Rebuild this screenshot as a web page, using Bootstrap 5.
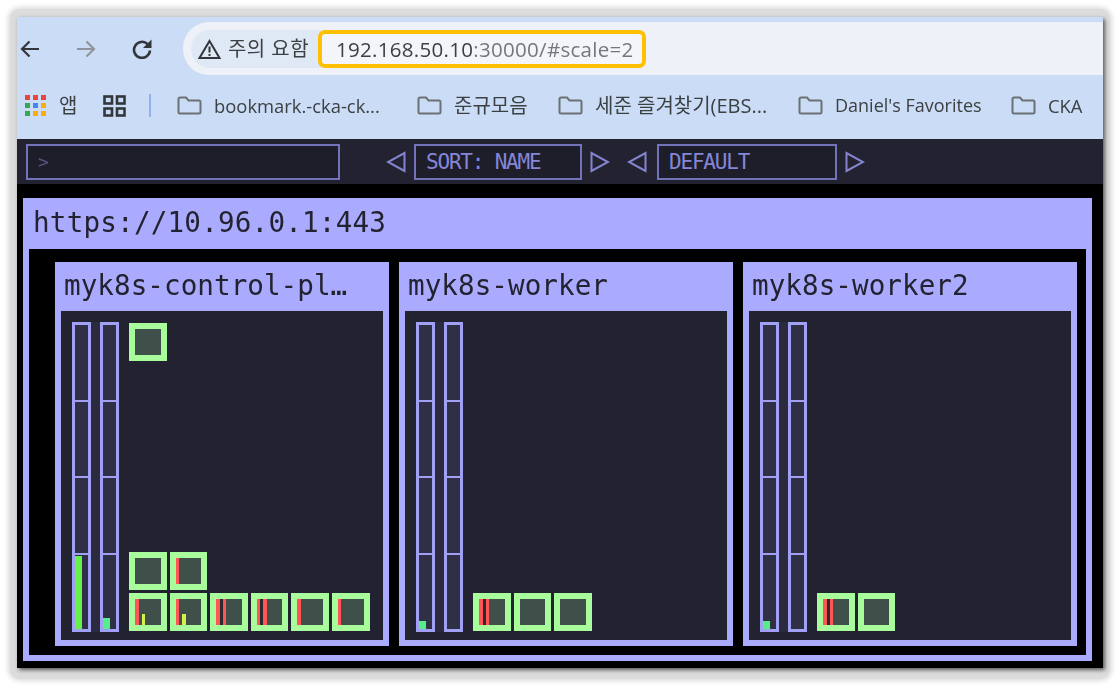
<!DOCTYPE html>
<html lang="ko">
<head>
<meta charset="utf-8">
<title>Kube Ops View</title>
<link href="https://cdn.jsdelivr.net/npm/bootstrap@5.3.0/dist/css/bootstrap.min.css" rel="stylesheet">
<style>
html,body{height:688px;overflow:hidden;background:#fff}
body{padding:9px 0 0 10px}
.frame{width:1100px;height:670px;background:#dcdcdc;box-shadow:0 0 5px 2px #dcdcdc;border-radius:10px;padding:8px 10px 0 7px}
.win{width:1086px;height:651px;background:#000;filter:blur(.5px);box-shadow:2px 2px 4px rgba(0,0,0,.6);overflow:hidden;font-family:"Open Sans","Noto Sans CJK KR",sans-serif;color:#3c4043}
.chrome{height:122px;background:#cbdcf6;padding-top:5px}
.navrow{height:53px;padding-left:3px}
.tb-ic{width:20px;height:20px;flex:none}
.ic2{margin-left:36px}.ic3{margin-left:36px}
.omni{margin-left:31px;flex:1;height:53px;background:#eef1f7;border-radius:26px 0 0 26px;padding-left:8px}
.chip{width:131px;height:38px;background:#dfe8f5;border-radius:19px 0 0 19px;padding-left:7px;gap:7px;font-size:20px;letter-spacing:.45px;white-space:nowrap}
.urlbox{width:328px;height:38px;border:4px solid #ffc000;border-radius:7px;background:#f3f5f9;font-size:20.5px;letter-spacing:.3px;line-height:30px;padding-left:14px;color:#74777c;white-space:nowrap;margin-left:-4px}
.urlbox b{font-weight:400;color:#3c4043}
.bmrow{height:64px;padding-left:8px;font-size:18.4px;white-space:nowrap;padding-bottom:3px}
.bm{flex:none;gap:12px}
.krt{font-size:20px}
.dft{font-size:18px}
.b0{width:78px;gap:13px}.b1{width:46px}.b2{width:28px}.b3{width:240px}.b4{width:141px}.b5{width:213px}.b6{width:240px}
.sep{width:2px;height:23px;background:#8fb2e8}
.darkbar{height:45px;background:#222230;padding-left:9px;font-family:"DejaVu Sans Mono",monospace;color:#8686d8}
.fld{height:36px;border:2px solid #7373bb;background:#1e1e2b;line-height:32px;padding-left:10px;font-size:18px}
.f1{width:314px;color:#555580}
.f2{width:168px;margin:0 8px 0 8px}.f3{width:180px;margin:0 8px 0 10px}
.fld span{display:inline-block;font-size:21px;letter-spacing:-1.2px;white-space:pre}
.tri{width:20px;height:22px;flex:none}
.t1{margin-left:46px}.t2{margin-left:0}.t3{margin-left:17px}
.clu{margin:14px 11px 0 6px;height:463px;background:#aaaaff;padding:0 6px 6px}
.clu-t{height:51px;font-family:"DejaVu Sans Mono",monospace;font-size:27.6px;line-height:50px;padding-left:4px;color:#222230;letter-spacing:.2px}
.clu-b{height:406px;background:#000;padding:13px 8px 9px 26px;gap:10px}
.nod{width:334px;height:384px;background:#aaaaff;padding:0 6px 6px;flex:none}
.nod-t{height:49px;font-family:"DejaVu Sans Mono",monospace;font-size:27.6px;line-height:47px;color:#222230;padding-left:3px;white-space:nowrap;letter-spacing:.05px}
.nod-b{height:329px;background:#222230;padding:11px 0 8px 11px}
.gau{width:19px;height:310px;border:3px solid #a0a0f4;background:#2f2f45;position:relative;flex:none}
.g2{margin-left:9px;box-shadow:-9px 0 0 0 #2b2b3d}
.seg{height:76.6px;border-bottom:2px solid #a0a0f4}
.seg:last-of-type{border:0}
.fil{position:absolute;bottom:0;left:0;width:6.5px}
.f-a{background:#66f04a}.f-b{background:#55ee88}
.pods{margin-left:10px;padding:1px 0 1.5px;height:310px}
.prow{gap:3px}
.pd{width:37.6px;height:37.6px;border:6.3px solid #a9fc9b;background:#3f4f4a;flex:none}
.r{width:3.5px;background:#ff5555;flex:none}
.k{width:3px;background:#2a2a30;flex:none}
.y{width:3.6px;height:11px;background:#d6f04a;align-self:flex-end;margin-left:3px;flex:none}
.rows{gap:3px}
</style>
</head>
<body>
<div class="frame">
<div class="win">
  <div class="chrome">
    <div class="navrow d-flex align-items-center">
      <svg class="tb-ic" viewBox="0 0 20 20" fill="none" stroke="#33373b" stroke-width="2.2"><path d="M19 10H2M9.5 2.5 2 10l7.5 7.5"/></svg>
      <svg class="tb-ic ic2" viewBox="0 0 20 20" fill="none" stroke="#90959c" stroke-width="2.2"><path d="M1 10h17M10.5 2.5 18 10l-7.5 7.5"/></svg>
      <svg class="tb-ic ic3" viewBox="0 0 20 20" fill="none" stroke="#33373b" stroke-width="2.6"><path d="M18 11.500a8 8 0 1 1-2.500-6.500"/><path d="M19.500 .5v8.500H11z" fill="#33373b" stroke="none"/></svg>
      <div class="omni d-flex align-items-center">
        <div class="chip d-flex align-items-center">
          <svg width="23" height="20" viewBox="0 0 23 20" fill="none" stroke="#33373b" stroke-width="2"><path d="M11.5 2 21.5 19h-20z"/><path d="M11.5 7.5v6M11.5 15v2"/></svg>
          <span>주의 요함</span>
        </div>
        <div class="urlbox"><b>192.168.50.10</b>:30000/#scale=2</div>
      </div>
    </div>
    <div class="bmrow d-flex align-items-center">
      <div class="bm b0 d-flex align-items-center">
        <svg width="21" height="21" viewBox="0 0 21 21"><g fill="#e8453c"><rect width="5" height="5"/><rect x="8" width="5" height="5"/><rect x="16" width="5" height="5"/></g><rect y="8" width="5" height="5" fill="#34a853"/><rect x="8" y="8" width="5" height="5" fill="#4285f4"/><rect x="16" y="8" width="5" height="5" fill="#fbac0b"/><rect y="16" width="5" height="5" fill="#34a853"/><rect x="8" y="16" width="5" height="5" fill="#fbac0b"/><rect x="16" y="16" width="5" height="5" fill="#fbac0b"/></svg>
        <span class="krt">앱</span>
      </div>
      <div class="bm b1 d-flex align-items-center">
        <svg width="23" height="22" viewBox="0 0 23 22" fill="none" stroke="#33373b" stroke-width="2.6"><rect x="1.5" y="1.5" width="7.5" height="7"/><rect x="14" y="1.5" width="7.5" height="7"/><rect x="1.5" y="13.5" width="7.5" height="7"/><rect x="14" y="13.5" width="7.5" height="7"/></svg>
      </div>
      <div class="bm b2 d-flex align-items-center"><div class="sep"></div></div>
      <div class="bm b3 d-flex align-items-center">
        <svg width="25" height="19" viewBox="0 0 25 19" fill="none" stroke="#6d7175" stroke-width="2"><path d="M1.5 16V3a1.5 1.5 0 0 1 1.5-1.5h6l2.500 3H22a1.500 1.500 0 0 1 1.500 1.500V16a1.500 1.500 0 0 1-1.500 1.500H3A1.500 1.500 0 0 1 1.500 16z"/></svg>
        <span>bookmark.-cka-ck...</span>
      </div>
      <div class="bm b4 d-flex align-items-center">
        <svg width="25" height="19" viewBox="0 0 25 19" fill="none" stroke="#6d7175" stroke-width="2"><path d="M1.5 16V3a1.5 1.5 0 0 1 1.5-1.5h6l2.500 3H22a1.500 1.500 0 0 1 1.500 1.500V16a1.500 1.500 0 0 1-1.500 1.500H3A1.500 1.500 0 0 1 1.500 16z"/></svg>
        <span class="krt">준규모음</span>
      </div>
      <div class="bm b6 d-flex align-items-center">
        <svg width="25" height="19" viewBox="0 0 25 19" fill="none" stroke="#6d7175" stroke-width="2"><path d="M1.5 16V3a1.5 1.5 0 0 1 1.5-1.5h6l2.500 3H22a1.500 1.500 0 0 1 1.500 1.500V16a1.500 1.500 0 0 1-1.500 1.500H3A1.500 1.500 0 0 1 1.500 16z"/></svg>
        <span class="krt">세준 즐겨찾기(EBS...</span>
      </div>
      <div class="bm b5 d-flex align-items-center">
        <svg width="25" height="19" viewBox="0 0 25 19" fill="none" stroke="#6d7175" stroke-width="2"><path d="M1.5 16V3a1.5 1.5 0 0 1 1.5-1.5h6l2.500 3H22a1.500 1.500 0 0 1 1.500 1.500V16a1.500 1.500 0 0 1-1.500 1.500H3A1.500 1.500 0 0 1 1.500 16z"/></svg>
        <span class="dft">Daniel's Favorites</span>
      </div>
      <div class="bm d-flex align-items-center">
        <svg width="25" height="19" viewBox="0 0 25 19" fill="none" stroke="#6d7175" stroke-width="2"><path d="M1.5 16V3a1.5 1.5 0 0 1 1.5-1.5h6l2.500 3H22a1.500 1.500 0 0 1 1.500 1.500V16a1.500 1.500 0 0 1-1.500 1.500H3A1.500 1.500 0 0 1 1.500 16z"/></svg>
        <span>CKA</span>
      </div>
    </div>
  </div>
  <div class="darkbar d-flex align-items-center">
    <div class="fld f1">&gt;</div>
    <svg class="tri t1" viewBox="0 0 20 22" fill="none" stroke="#8484d0" stroke-width="2"><path d="M18.500 2v18L2 11z"/></svg>
    <div class="fld f2"><span>SORT: NAME</span></div>
    <svg class="tri t2" viewBox="0 0 20 22" fill="none" stroke="#8484d0" stroke-width="2"><path d="M1.500 2v18L18 11z"/></svg>
    <svg class="tri t3" viewBox="0 0 20 22" fill="none" stroke="#8484d0" stroke-width="2"><path d="M18.500 2v18L2 11z"/></svg>
    <div class="fld f3"><span>DEFAULT</span></div>
    <svg class="tri t2" viewBox="0 0 20 22" fill="none" stroke="#8484d0" stroke-width="2"><path d="M1.500 2v18L18 11z"/></svg>
  </div>
  <div class="clu">
    <div class="clu-t">https://10.96.0.1:443</div>
    <div class="clu-b d-flex">
      <div class="nod">
        <div class="nod-t">myk8s-control-pl…</div>
        <div class="nod-b d-flex">
          <div class="gau"><div class="seg"></div><div class="seg"></div><div class="seg"></div><div class="seg"></div><div class="fil f-a" style="height:73px"></div></div>
          <div class="gau g2"><div class="seg"></div><div class="seg"></div><div class="seg"></div><div class="seg"></div><div class="fil f-b" style="height:11px"></div></div>
          <div class="pods d-flex flex-column">
            <div class="prow d-flex"><div class="pd"></div></div>
            <div class="rows d-flex flex-column mt-auto">
              <div class="prow d-flex">
                <div class="pd"></div>
                <div class="pd d-flex"><div class="r"></div></div>
              </div>
              <div class="prow d-flex">
                <div class="pd d-flex"><div class="r"></div><div class="y"></div></div>
                <div class="pd d-flex"><div class="r"></div><div class="y"></div></div>
                <div class="pd d-flex"><div class="r"></div><div class="k"></div><div class="r"></div></div>
                <div class="pd d-flex"><div class="r"></div><div class="k"></div><div class="r"></div></div>
                <div class="pd d-flex"><div class="r"></div></div>
                <div class="pd d-flex"><div class="r"></div></div>
              </div>
            </div>
          </div>
        </div>
      </div>
      <div class="nod">
        <div class="nod-t">myk8s-worker</div>
        <div class="nod-b d-flex">
          <div class="gau"><div class="seg"></div><div class="seg"></div><div class="seg"></div><div class="seg"></div><div class="fil f-b" style="height:8px"></div></div>
          <div class="gau g2"><div class="seg"></div><div class="seg"></div><div class="seg"></div><div class="seg"></div></div>
          <div class="pods d-flex flex-column">
            <div class="rows d-flex flex-column mt-auto">
              <div class="prow d-flex">
                <div class="pd d-flex"><div class="r"></div><div class="k"></div><div class="r"></div></div>
                <div class="pd"></div>
                <div class="pd"></div>
              </div>
            </div>
          </div>
        </div>
      </div>
      <div class="nod">
        <div class="nod-t">myk8s-worker2</div>
        <div class="nod-b d-flex">
          <div class="gau"><div class="seg"></div><div class="seg"></div><div class="seg"></div><div class="seg"></div><div class="fil f-b" style="height:8px"></div></div>
          <div class="gau g2"><div class="seg"></div><div class="seg"></div><div class="seg"></div><div class="seg"></div></div>
          <div class="pods d-flex flex-column">
            <div class="rows d-flex flex-column mt-auto">
              <div class="prow d-flex">
                <div class="pd d-flex"><div class="r"></div><div class="k"></div><div class="r"></div></div>
                <div class="pd"></div>
              </div>
            </div>
          </div>
        </div>
      </div>
    </div>
  </div>
</div>
</div>
<script src="https://cdn.jsdelivr.net/npm/bootstrap@5.3.0/dist/js/bootstrap.bundle.min.js"></script>
</body>
</html>
